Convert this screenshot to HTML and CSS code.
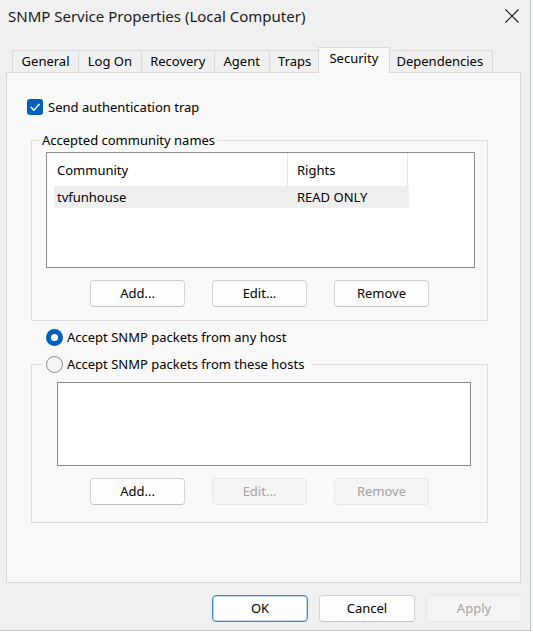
FILE: index.html
```html
<!DOCTYPE html>
<html>
<head>
<meta charset="utf-8">
<title>SNMP Service Properties</title>
<link rel="stylesheet" href="styles.css">
</head>
<body>
<div class="window">
  <div class="titlebar">
    <span class="title">SNMP Service Properties (Local Computer)</span>
    <svg class="close" viewBox="0 0 14 14"><path d="M0.5 0.5 L13.5 13.5 M13.5 0.5 L0.5 13.5" stroke="#1f1f1f" stroke-width="1.2" fill="none"/></svg>
  </div>
  <div class="tabs">
    <div class="tab">General</div>
    <div class="tab">Log On</div>
    <div class="tab">Recovery</div>
    <div class="tab">Agent</div>
    <div class="tab">Traps</div>
    <div class="tab active">Security</div>
    <div class="tab">Dependencies</div>
  </div>
  <div class="panel">
    <div class="check-row">
      <svg class="checkbox" viewBox="0 0 16 16"><rect x="0" y="0" width="16" height="16" rx="3" fill="#005fb8"/><path d="M4 8.3 L6.9 11.2 L12.2 5.2" stroke="#fff" stroke-width="1.4" fill="none" stroke-linecap="round" stroke-linejoin="round"/></svg>
      <span>Send authentication trap</span>
    </div>
    <fieldset class="group group-community">
      <legend>Accepted community names</legend>
      <div class="listview">
        <div class="lv-header">
          <div class="col col-name">Community</div>
          <div class="col col-rights">Rights</div>
        </div>
        <div class="lv-row">
          <div class="cell col-name">tvfunhouse</div>
          <div class="cell col-rights">READ ONLY</div>
        </div>
      </div>
      <div class="btn-row">
        <button class="btn">Add...</button>
        <button class="btn">Edit...</button>
        <button class="btn">Remove</button>
      </div>
    </fieldset>
    <div class="radio-row">
      <svg class="radio" viewBox="0 0 17 17"><circle cx="8.5" cy="8.5" r="8.5" fill="#005fb8"/><circle cx="8.5" cy="8.5" r="3.6" fill="#fff"/></svg>
      <span>Accept SNMP packets from any host</span>
    </div>
    <fieldset class="group group-hosts">
      <legend><span class="radio-label"><svg class="radio" viewBox="0 0 17 17"><circle cx="8.5" cy="8.5" r="8" fill="#f6f6f6" stroke="#858585" stroke-width="1"/></svg><span>Accept SNMP packets from these hosts</span></span></legend>
      <div class="hostlist"></div>
      <div class="btn-row">
        <button class="btn">Add...</button>
        <button class="btn" disabled>Edit...</button>
        <button class="btn" disabled>Remove</button>
      </div>
    </fieldset>
  </div>
  <div class="footer">
    <button class="btn wide default">OK</button>
    <button class="btn wide">Cancel</button>
    <button class="btn wide" disabled>Apply</button>
  </div>
</div>
</body>
</html>
```
FILE: styles.css
```css
body {
  margin: 0;
  background: #ffffff;
  font-family: "Noto Sans", sans-serif;
  font-size: 13px;
  color: #000;
}

.window {
  width: 530px;
  height: 630px;
  background: #f0f0f0;
  border-right: 1px solid #b9c3cc;
  border-bottom: 1px solid #c8c8c8;
  display: flex;
  flex-direction: column;
}

.titlebar {
  height: 47px;
  flex: none;
  display: flex;
  justify-content: space-between;
  align-items: flex-start;
}

.title {
  margin: 6px 0 0 8px;
  font-size: 15px;
  line-height: 20px;
  color: #1a1a1a;
}

.close {
  margin: 9px 11px 0 0;
  width: 14px;
  height: 14px;
}

.tabs {
  display: flex;
  align-items: flex-end;
  height: 25px;
  flex: none;
  margin-left: 13px;
  position: relative;
  z-index: 1;
}

.tab {
  height: 22px;
  line-height: 20px;
  padding: 0 8.6px;
  box-sizing: border-box;
  border: 1px solid #d9d9d9;
  border-bottom: none;
  margin-left: -1px;
  background: #f0f0f0;
  white-space: nowrap;
}

.tab.active {
  height: 26px;
  margin-bottom: -1px;
  margin-left: -3px;
  margin-right: -2px;
  padding: 0 10.6px;
  background: #f9f9f9;
  position: relative;
  z-index: 1;
}

.panel {
  margin-left: 6px;
  width: 515px;
  height: 511px;
  flex: none;
  box-sizing: border-box;
  border: 1px solid #d9d9d9;
  background: #f9f9f9;
  padding-top: 24px;
}

.check-row {
  display: flex;
  align-items: center;
  gap: 5px;
  height: 20px;
  margin-left: 20px;
}

.checkbox {
  width: 16px;
  height: 16px;
  flex: none;
}

.group {
  border: 1px solid #dcdcdc;
  margin: 0 0 0 24px;
  width: 457px;
  min-width: 0;
  box-sizing: border-box;
  padding: 0 0 13px 8px;
}

.group legend {
  padding: 0 2px;
  line-height: 20px;
  height: 20px;
}

.group-community {
  margin-top: 13px;
}

.listview {
  margin: 2px 0 0 6px;
  width: 429px;
  height: 116px;
  box-sizing: border-box;
  border: 1px solid #8c8c8c;
  background: #fff;
  padding-left: 7px;
}

.lv-header {
  display: flex;
  height: 33px;
}

.col {
  height: 33px;
  box-sizing: border-box;
  border-right: 1px solid #e5e5e5;
  display: flex;
  align-items: center;
}

.lv-row {
  display: flex;
  width: 355px;
  height: 22px;
  background: #efefef;
}

.cell {
  display: flex;
  align-items: center;
  box-sizing: border-box;
}

.col-name {
  width: 234px;
  padding-left: 3px;
}

.col-rights {
  width: 120px;
  padding-left: 9px;
}

.btn-row {
  display: flex;
  gap: 27px;
  margin: 12px 0 0 50px;
}

.btn {
  width: 95px;
  height: 27px;
  box-sizing: border-box;
  border: 1px solid #d3d3d3;
  border-bottom-color: #c2c2c2;
  border-radius: 4px;
  background: #fdfdfd;
  font: inherit;
  color: #000;
  padding: 0 0 2px 0;
}

.btn:disabled {
  color: #a3a3a3;
  background: #f5f5f5;
  border-color: #e6e6e6;
}

.btn.wide {
  width: 96px;
}

.btn.default {
  border-color: #3a87d6;
  box-shadow: inset 0 0 0 1px rgba(58, 135, 214, 0.3);
}

.radio-row {
  display: flex;
  align-items: center;
  gap: 4px;
  height: 20px;
  margin: 6px 0 0 39px;
}

.radio {
  width: 17px;
  height: 17px;
  flex: none;
}

.group-hosts {
  margin-top: 7px;
  padding: 0 0 17px 11px;
}

.group-hosts legend {
  padding: 0 8px 0 3px;
}

.radio-label {
  display: flex;
  align-items: center;
  gap: 4px;
  height: 20px;
}

.hostlist {
  margin: 8px 0 0 14px;
  width: 414px;
  height: 84px;
  box-sizing: border-box;
  border: 1px solid #8c8c8c;
  background: #fff;
}

.group-hosts .btn-row {
  margin-left: 47px;
}

.footer {
  display: flex;
  justify-content: flex-end;
  gap: 11px;
  margin: 12px 8px 0 0;
}
```
